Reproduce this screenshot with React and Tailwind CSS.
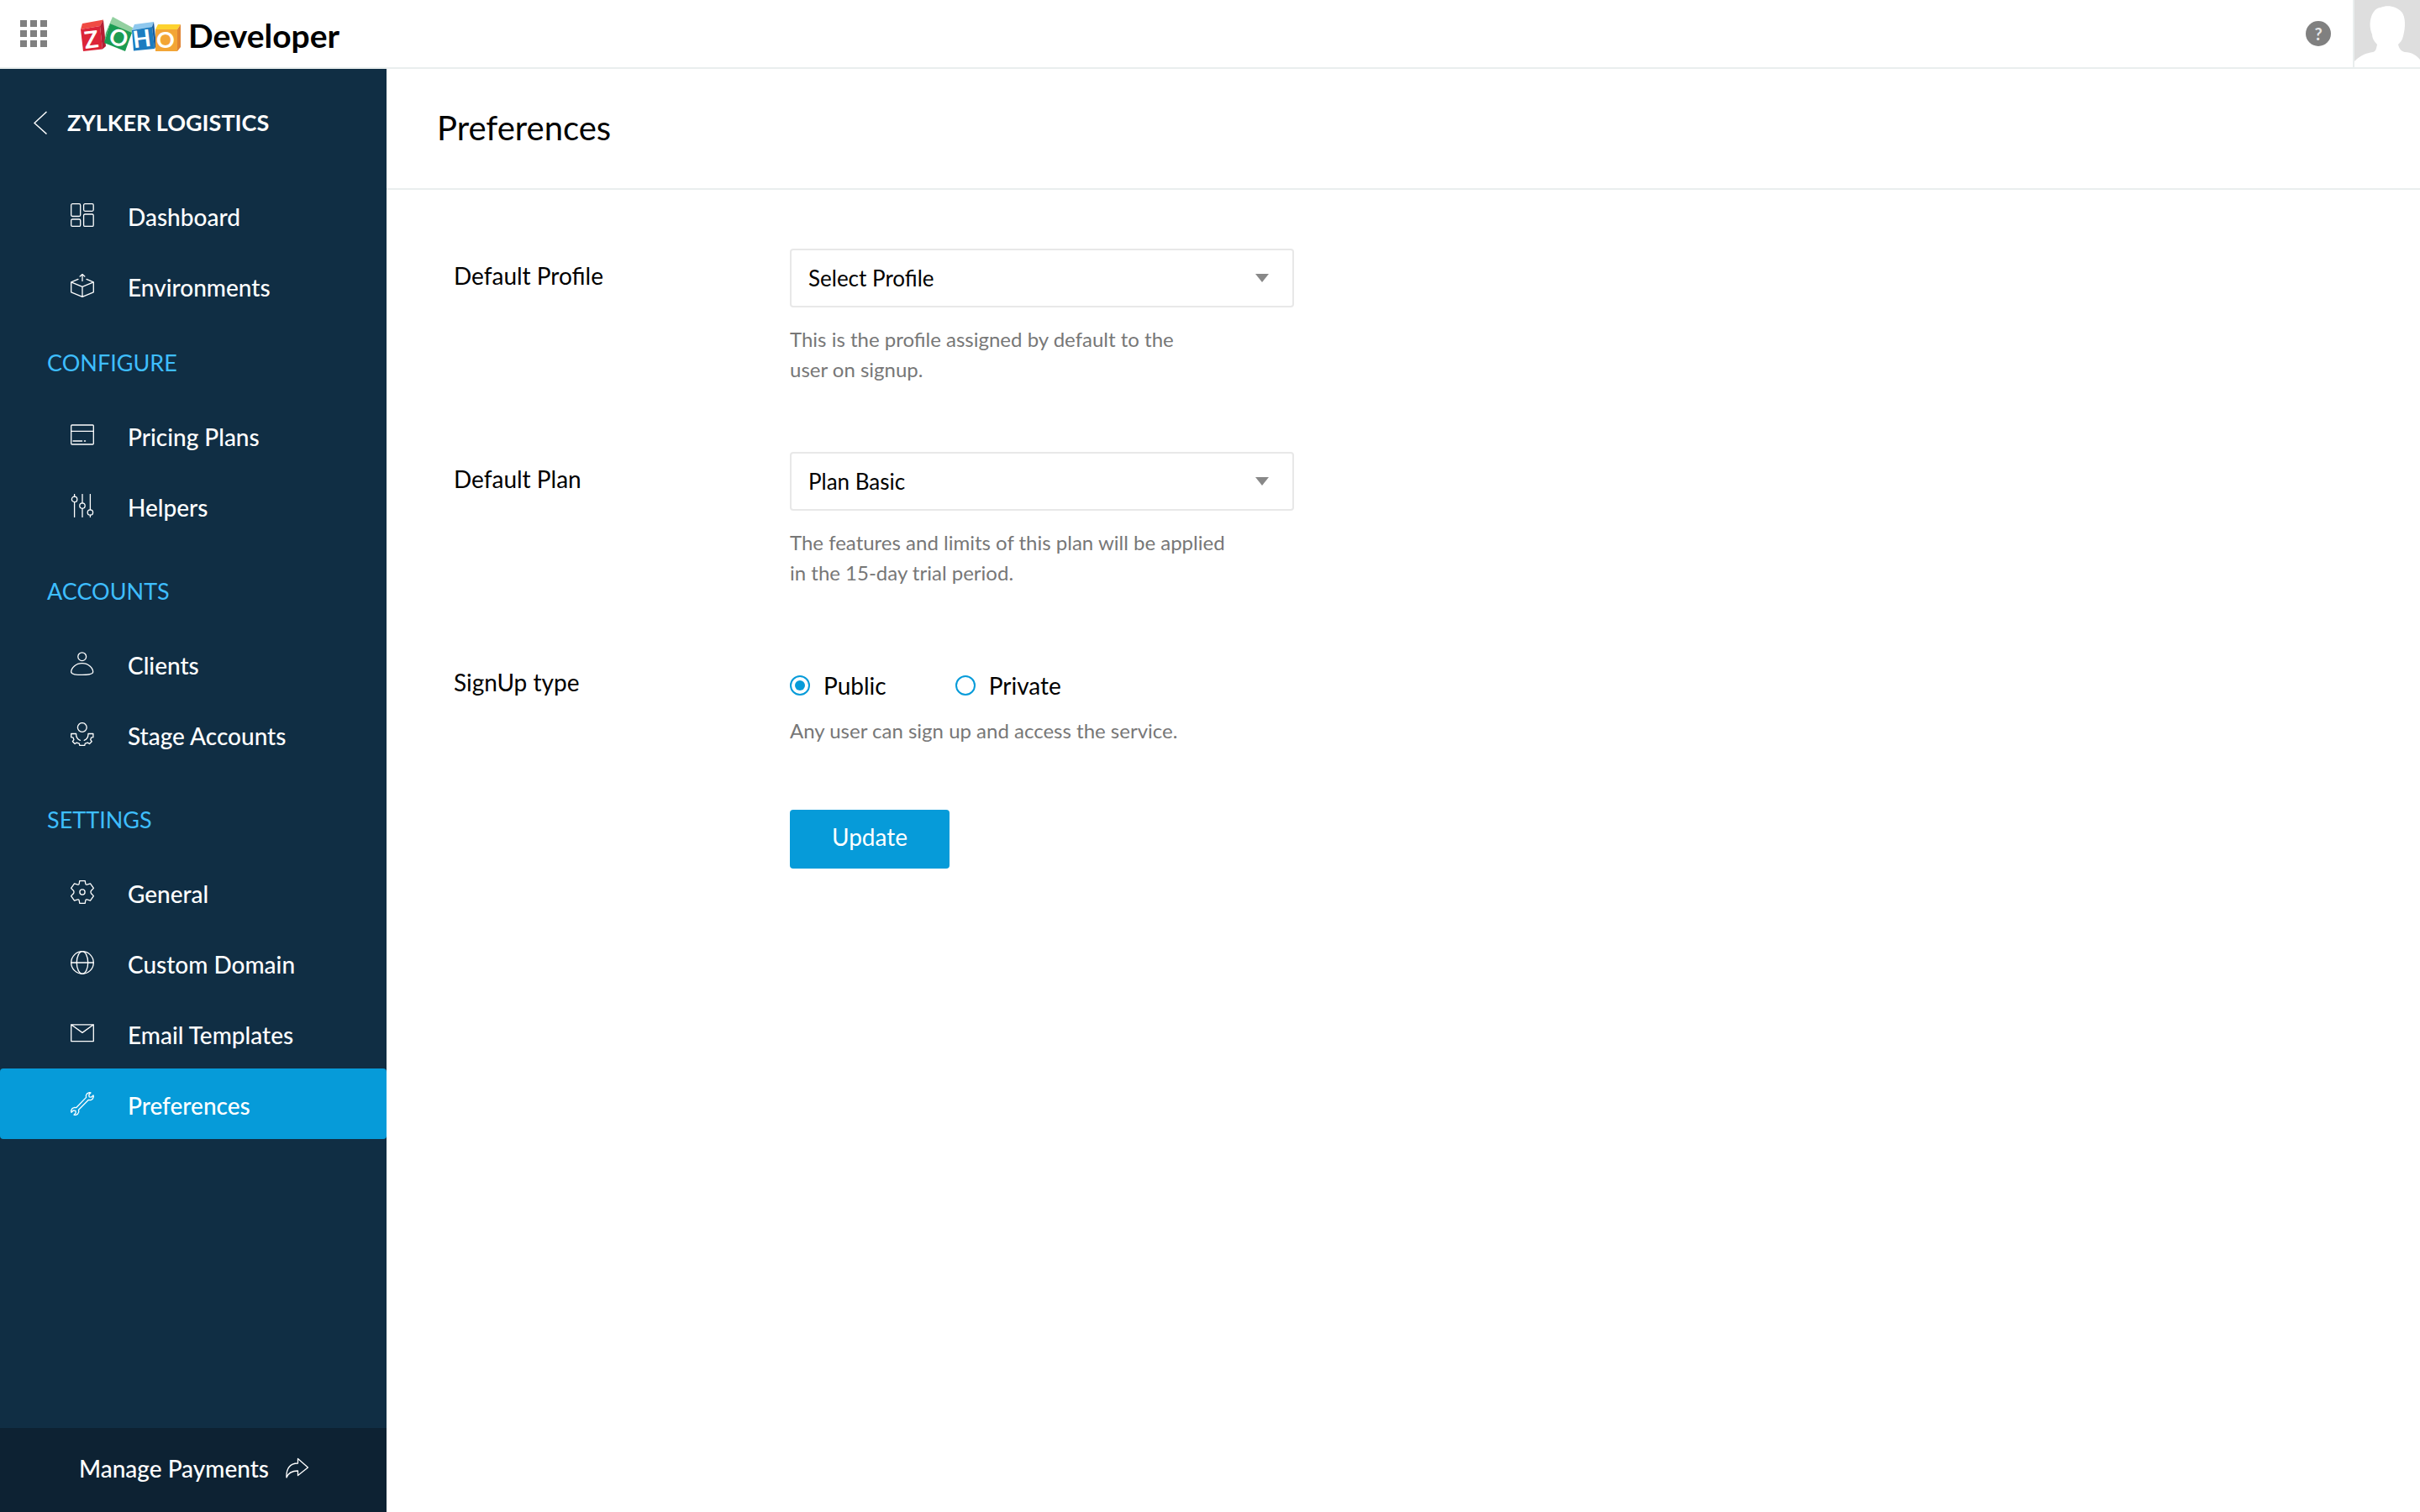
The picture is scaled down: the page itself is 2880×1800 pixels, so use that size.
import { useState } from "react";

function Icon({ children, className = "" }) {
  return (
    <svg
      viewBox="0 0 28 28"
      className={`size-7 shrink-0 ${className}`}
      fill="none"
      stroke="currentColor"
      strokeWidth="1.3"
      strokeLinejoin="round"
      strokeLinecap="round"
      aria-hidden="true"
    >
      {children}
    </svg>
  );
}

const icons = {
  dashboard: (
    <Icon>
      <rect x="0.7" y="0.7" width="11" height="14.8" rx="1.5" />
      <rect x="15.6" y="0.7" width="11.6" height="8.6" rx="1.5" />
      <rect x="0.7" y="19" width="11" height="8.4" rx="1.5" />
      <rect x="15.6" y="13" width="11.6" height="14.4" rx="1.5" />
    </Icon>
  ),
  environments: (
    <Icon>
      <path d="M9 6.4 0.7 9.8v12L14 27.3l13.3-5.5v-12L19 6.4M0.7 9.8 14 15.4l13.3-5.6M14 15.4v11.9M14 8.4V0.8M11.2 3 14 0.6 16.8 3" />
    </Icon>
  ),
  pricing: (
    <Icon>
      <rect x="0.7" y="2" width="26.6" height="23" rx="1" />
      <path d="M0.7 9.3h26.6M3 21h10.6M16.4 21h1.2" />
    </Icon>
  ),
  helpers: (
    <Icon>
      <path d="M4.6 0.5v2.7M4.6 9.6v17.9M14 0.5v10.4M14 17.3v10.2M23.4 0.5v18.3M23.4 25.2v2.3" />
      <circle cx="4.6" cy="6.4" r="3.2" />
      <circle cx="14" cy="14.1" r="3.2" />
      <circle cx="23.4" cy="22" r="3.2" />
    </Icon>
  ),
  clients: (
    <Icon>
      <circle cx="13.7" cy="5.7" r="4.9" />
      <path d="M13.7 13.7c7.4 0 13 5.3 13 10.4 0 2.6-6.2 3.4-13 3.4s-13-.8-13-3.4c0-5.1 5.6-10.4 13-10.4Z" />
    </Icon>
  ),
  stage: (
    <Icon>
      <circle cx="13.8" cy="6" r="5.4" />
      <path d="M11.4 21.3C8.4 20.3 6.6 17.6 6.6 13.5H0.7v4.2l2.4.5.8 2.4-1.5 2.1 2.7 2.8 2.2-1.4 3 1.1.6 2.3h5.8l.6-2.3 3-1.1 2.2 1.4 2.7-2.8-1.5-2.1.8-2.4 2.4-.5v-4.2H21c0 4.1-1.8 6.8-4.8 7.8" />
    </Icon>
  ),
  general: (
    <Icon>
      <circle cx="14" cy="14" r="3.1" />
      <path d="M10.8 0.6h6.4l.7 3.7q.3 1.1 1.6.8l4-1.2 3.9 5.5-2.8 2.8q-1.2 1.8 0 3.6l2.8 2.8-3.9 5.5-4-1.2q-1.3-.3-1.6.8l-.7 3.7h-6.4l-.7-3.7q-.3-1.1-1.6-.8l-4 1.2L.6 18.6l2.8-2.8q1.2-1.8 0-3.6L.6 9.4l3.9-5.5 4 1.2q1.3.3 1.6-.8Z" />
    </Icon>
  ),
  domain: (
    <Icon>
      <circle cx="14" cy="14" r="13.3" />
      <ellipse cx="14" cy="14" rx="6.7" ry="13.3" />
      <path d="M0.7 14h26.6" />
    </Icon>
  ),
  email: (
    <Icon>
      <path d="M0.7 3.8h26.6v19.8H0.7ZM0.7 3.8 14 13.4 27.3 3.8" />
    </Icon>
  ),
  wrench: (
    <Icon>
      <path d="M18.6 6.4 18.3 4.2 19.6 1.9 22.3 0.6 24 0.8 21.8 3.3 22.2 5.8 24.6 6.2 27 4 27.4 5.6 26.1 8.4 23.8 9.7 21.2 9.5 9.5 21.2 9.8 23.8 8.4 26.3 5.7 27.6 4 27.2 6.2 24.9 5.9 22.3 3.4 21.9 1 24.2 0.6 22.4 1.9 19.7 4.3 18.5 6.6 18.7Z" />
    </Icon>
  ),
};

const sections = [
  {
    items: [
      { label: "Dashboard", icon: "dashboard" },
      { label: "Environments", icon: "environments" },
    ],
  },
  {
    title: "CONFIGURE",
    first: true,
    items: [
      { label: "Pricing Plans", icon: "pricing" },
      { label: "Helpers", icon: "helpers" },
    ],
  },
  {
    title: "ACCOUNTS",
    items: [
      { label: "Clients", icon: "clients" },
      { label: "Stage Accounts", icon: "stage" },
    ],
  },
  {
    title: "SETTINGS",
    items: [
      { label: "General", icon: "general" },
      { label: "Custom Domain", icon: "domain" },
      { label: "Email Templates", icon: "email" },
      { label: "Preferences", icon: "wrench", active: true },
    ],
  },
];

function ZohoLogo() {
  return (
    <svg viewBox="96 8 120 60" className="h-[60px] w-[120px] shrink-0" role="img" aria-label="Zoho">
      <path d="M98 26 123 21.500 119 29 96 33Z" fill="#f04a43" />
      <path d="M96 33 119 29 122 56.500 99 59Z" fill="#dc2438" />
      <path d="M119 29 123 21.500 126 53 122 56.500Z" fill="#b51f34" />
      <path d="M134 18 158 31 157 38 131 26Z" fill="#93d0a0" />
      <path d="M134 18 131 26 124 49 126 37Z" fill="#4fb36a" />
      <path d="M131 26 157 37 149 59 124 49Z" fill="#1b9c52" />
      <path d="M160 27 183 24 181 30 157 34Z" fill="#8fc8ee" />
      <path d="M157 34 181 30 184 56 159 58.500Z" fill="#1c7cc0" />
      <path d="M183 24 186 52 184 56 181 30Z" fill="#1a5d9e" />
      <path d="M188 27H215L211 33H185Z" fill="#fdd22f" />
      <path d="M185 33H211V59H185Z" fill="#f3a536" />
      <path d="M211 33 215 27V54L211 59Z" fill="#e08433" />
      <g fill="#fff" fontFamily="Lato, sans-serif" fontWeight="700" fontSize="28" textAnchor="middle">
        <text x="110" y="55" transform="rotate(-7 110 55)">Z</text>
        <text x="138" y="52" fontSize="27" transform="rotate(20 138 52)">O</text>
        <text x="170" y="54" transform="rotate(-7 170 54)">H</text>
        <text x="197" y="55" fontSize="27">O</text>
      </g>
    </svg>
  );
}

function TopBar() {
  return (
    <header className="flex h-[82px] items-stretch border-b-2 border-[#e9eeee] bg-white">
      <div className="flex flex-1 items-center pl-6">
        <button type="button" aria-label="Apps" className="grid grid-cols-3 gap-1">
          {Array.from({ length: 9 }, (_, i) => (
            <span key={i} className="size-2 bg-[#808080]" />
          ))}
        </button>
        <a href="#" className="ml-10 flex items-center gap-2">
          <ZohoLogo />
          <span className="pt-1 text-[39px] leading-10 font-bold text-black">Developer</span>
        </a>
      </div>
      <button
        type="button"
        aria-label="Help"
        className="mr-[26px] size-[30px] self-center rounded-full bg-[#808080] text-center text-[20px] leading-[30px] font-bold text-[#e8e8e8]"
      >
        ?
      </button>
      <button type="button" aria-label="Account" className="border-l-2 border-[#e9eeee] bg-[#dedede]">
        <svg viewBox="0 0 78 80" className="h-20 w-[78px]" aria-hidden="true">
          <path
            d="M0 80V73C7 66 14 63 22 62 26 61 26 57 27 53 23 49 21 45 21 41 18 34 18 26 20 20 22 14 26 9 31 9 40 5 50 8 56 14 61 20 61 32 58 43 57 48 54 51 52 53 53 57 55 61 60 62 68 62 74 66 78 71V80Z"
            fill="#fff"
          />
        </svg>
      </button>
    </header>
  );
}

function Sidebar() {
  return (
    <aside className="flex w-[460px] shrink-0 flex-col bg-[#102e44] text-[28px] leading-9 text-white">
      <a href="#" className="flex h-[132px] items-start gap-6 pt-[46px] pl-10 text-[27px] font-bold">
        <svg viewBox="0 0 16 28" className="mt-1 h-7 w-4" fill="none" stroke="currentColor" strokeWidth="1.5" aria-hidden="true">
          <path d="M15.500 1 1 14.500 15.500 27.500" />
        </svg>
        <span>ZYLKER LOGISTICS</span>
      </a>
      <nav className="flex-1">
        {sections.map((section, i) => (
          <section key={i}>
            {section.title && (
              <h2 className={`pb-[26px] pl-14 text-[27px] text-[#3ebeff] ${section.first ? "pt-8" : "pt-[42px]"}`}>
                {section.title}
              </h2>
            )}
            <ul>
              {section.items.map((item) => (
                <li key={item.label}>
                  <a
                    href="#"
                    aria-current={item.active ? "page" : undefined}
                    className={`flex h-[84px] items-center gap-10 rounded px-[84px] whitespace-nowrap ${
                      item.active ? "bg-[#069bd9]" : ""
                    }`}
                  >
                    {icons[item.icon]}
                    <span className="pt-1 font-medium">{item.label}</span>
                  </a>
                </li>
              ))}
            </ul>
          </section>
        ))}
      </nav>
      <a href="#" className="flex h-[100px] items-center gap-5 bg-[#0d2233] pb-1 pl-[94px] font-medium">
        <span>Manage Payments</span>
        <Icon>
          <path d="M14.500 2.500 26.500 13 14.500 22.500V17C7 17 3 19.500 1 25 0.500 15 4.500 8 14.500 8Z" />
        </Icon>
      </a>
    </aside>
  );
}

function SelectField({ id, label, help, options }) {
  return (
    <div className="flex min-h-[242px]">
      <label htmlFor={id} className="w-[400px] shrink-0 pt-[14px] text-[28px] leading-9">
        {label}
      </label>
      <div>
        <div className="relative w-[600px]">
          <select
            id={id}
            className="h-[70px] w-full appearance-none rounded border-2 border-[#e8e8e8] bg-white px-5 text-[26px] text-black"
          >
            {options.map((option) => (
              <option key={option}>{option}</option>
            ))}
          </select>
          <svg
            viewBox="0 0 16 10"
            className="pointer-events-none absolute top-[30px] right-[30px] h-[10px] w-4"
            fill="#888"
            aria-hidden="true"
          >
            <path d="M0 0h16L8 10Z" />
          </svg>
        </div>
        <p className="mt-5 w-[520px] text-[24px] leading-9 text-[#777]">{help}</p>
      </div>
    </div>
  );
}

function SignUpType() {
  const [value, setValue] = useState("Public");
  return (
    <fieldset className="flex">
      <legend className="float-left w-[400px] shrink-0 pt-[14px] text-[28px] leading-9">SignUp type</legend>
      <div className="pt-[18px]">
        <div className="flex gap-[82px]">
          {["Public", "Private"].map((option) => (
            <label key={option} className="flex items-center gap-4 text-[28px] leading-9">
              <input
                type="radio"
                name="signup-type"
                value={option}
                checked={value === option}
                onChange={() => setValue(option)}
                className="grid size-6 appearance-none place-content-center rounded-full border-2 border-[#069bd9] bg-white before:size-3 before:rounded-full checked:before:bg-[#069bd9]"
              />
              {option}
            </label>
          ))}
        </div>
        <p className="mt-[18px] text-[24px] leading-9 text-[#777]">Any user can sign up and access the service.</p>
        <button type="submit" className="mt-[76px] h-[70px] w-[190px] rounded bg-[#069bd9] pb-1.5 text-[28px] text-white">
          Update
        </button>
      </div>
    </fieldset>
  );
}

export default function App() {
  return (
    <div className="flex min-h-screen flex-col bg-white font-['Lato',sans-serif] text-black">
      <TopBar />
      <div className="flex flex-1">
        <Sidebar />
        <main className="flex-1">
          <div className="border-b-2 border-[#e9eeee] px-[60px] pt-[46px] pb-12">
            <h1 className="text-[40px] leading-12">Preferences</h1>
          </div>
          <form className="px-20 pt-[70px]" onSubmit={(event) => event.preventDefault()}>
            <SelectField
              id="default-profile"
              label="Default Profile"
              help={"This is the profile assigned by default to the user\u00a0on signup."}
              options={["Select Profile"]}
            />
            <SelectField
              id="default-plan"
              label="Default Plan"
              help="The features and limits of this plan will be applied in the 15-day trial period."
              options={["Plan Basic"]}
            />
            <SignUpType />
          </form>
        </main>
      </div>
    </div>
  );
}
